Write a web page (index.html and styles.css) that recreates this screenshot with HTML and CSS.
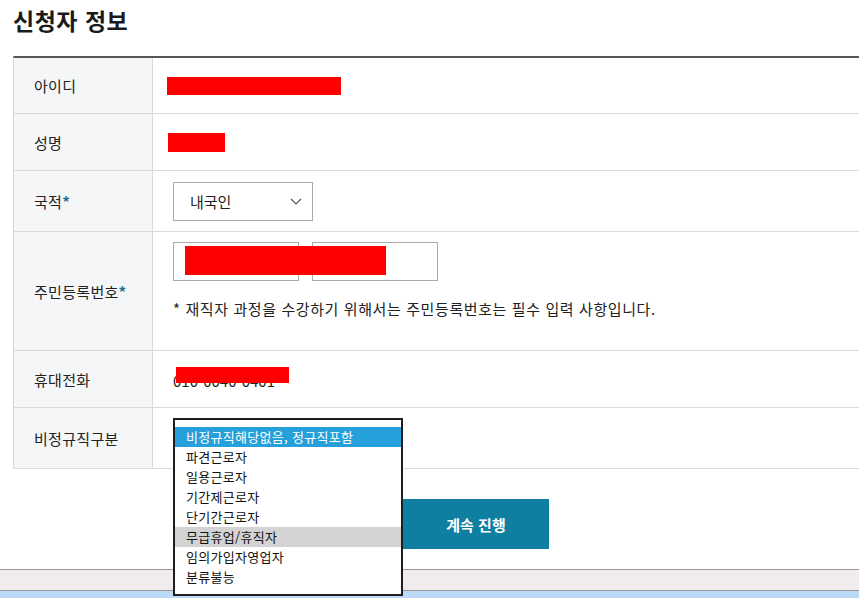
FILE: index.html
```html
<!DOCTYPE html>
<html lang="ko">
<head>
  <meta charset="UTF-8" />
  <title>신청자 정보</title>
  <link rel="stylesheet" href="styles.css">
</head>
<body>
  <div class="page">
    <h1>신청자 정보</h1>
    <div class="form-table">
      <div class="row row-first">
        <div class="label">아이디</div>
        <div class="value"><span class="mask mask-id"></span></div>
      </div>
      <div class="row">
        <div class="label">성명</div>
        <div class="value"><span class="mask mask-name"></span></div>
      </div>
      <div class="row row-mid">
        <div class="label">국적<span class="req">*</span></div>
        <div class="value">
          <div class="select">
            <span>내국인</span>
            <svg width="12" height="7" viewBox="0 0 12 7"><polyline points="1,1 6,6 11,1" fill="none" stroke="#555" stroke-width="1.1"/></svg>
          </div>
        </div>
      </div>
      <div class="row row-tall">
        <div class="label">주민등록번호<span class="req">*</span></div>
        <div class="value value-stack">
          <div class="ssn">
            <div class="input"></div>
            <div class="input"></div>
            <span class="mask mask-ssn"></span>
          </div>
          <p class="note">* 재직자 과정을 수강하기 위해서는 주민등록번호는 필수 입력 사항입니다.</p>
        </div>
      </div>
      <div class="row">
        <div class="label">휴대전화</div>
        <div class="value">
          <div class="phone">010-0040-0401<span class="mask mask-phone"></span></div>
        </div>
      </div>
      <div class="row row-mid">
        <div class="label">비정규직구분</div>
        <div class="value value-top">
          <div class="combo">
            <ul class="options">
              <li class="selected">비정규직해당없음, 정규직포함</li>
              <li>파견근로자</li>
              <li>일용근로자</li>
              <li>기간제근로자</li>
              <li>단기간근로자</li>
              <li class="hover">무급휴업/휴직자</li>
              <li>임의가입자영업자</li>
              <li>분류불능</li>
            </ul>
          </div>
        </div>
      </div>
    </div>
    <div class="actions">
      <button class="btn-next">계속 진행</button>
    </div>
  </div>
  <div class="statusbar"></div>
  <div class="taskbar"></div>
</body>
</html>
```

FILE: styles.css
```css
html, body {
  margin: 0;
  padding: 0;
  overflow: hidden;
}
body {
  width: 859px;
  height: 598px;
  font-family: "Noto Sans CJK KR", "Noto Sans", sans-serif;
  color: #222;
  background: #fff;
}
.page {
  padding-left: 13px;
  width: 1000px;
}
h1 {
  margin: 0 0 20px;
  padding-top: 4px;
  font-size: 23px;
  line-height: 32px;
  font-weight: 700;
  color: #1a1a1a;
  letter-spacing: 0.5px;
}
.form-table {
  border-top: 2px solid #555;
  border-left: 1px solid #dadada;
}
.row {
  display: grid;
  grid-template-columns: 139px 1fr;
  height: 57px;
  box-sizing: border-box;
  border-bottom: 1px solid #dadada;
}
.row-first {
  height: 56px;
}
.row-mid {
  height: 61px;
}
.row-tall {
  height: 119px;
}
.label {
  display: flex;
  align-items: center;
  padding-left: 20px;
  background: #f5f6f8;
  border-right: 1px solid #dadada;
  font-size: 15px;
  letter-spacing: 0.3px;
}
.req {
  color: #1a6f9a;
  font-weight: 700;
}
.value {
  display: flex;
  align-items: center;
  padding-left: 15px;
  position: relative;
}
.mask {
  display: block;
  background: #ff0000;
}
.mask-id {
  width: 174px;
  height: 18px;
  margin-left: -1px;
}
.mask-name {
  width: 57px;
  height: 19px;
}
.select {
  margin-left: 5px;
  width: 140px;
  height: 39px;
  box-sizing: border-box;
  border: 1px solid #aaa;
  display: flex;
  align-items: center;
  justify-content: space-between;
  padding: 0 10px 0 16px;
  font-size: 15px;
}
.value-stack {
  flex-direction: column;
  align-items: flex-start;
  justify-content: flex-start;
  padding-top: 10px;
}
.ssn {
  position: relative;
  display: flex;
  gap: 13px;
  margin-left: 5px;
}
.input {
  width: 126px;
  height: 39px;
  box-sizing: border-box;
  border: 1px solid #aaa;
}
.mask-ssn {
  position: absolute;
  left: 12px;
  top: 4px;
  width: 201px;
  height: 29px;
}
.note {
  margin: 18px 0 0 5px;
  font-size: 15px;
  line-height: 20px;
  letter-spacing: 0.6px;
}
.phone {
  position: relative;
  margin-left: 5px;
  font-size: 15px;
  line-height: 20px;
  padding-top: 4px;
}
.mask-phone {
  position: absolute;
  left: 3px;
  top: 0;
  width: 113px;
  height: 16px;
}
.value-top {
  align-items: flex-start;
}
.combo {
  position: relative;
  margin-left: 5px;
}
.options {
  position: absolute;
  left: 0;
  top: 10px;
  z-index: 5;
  width: 230px;
  height: 178px;
  box-sizing: border-box;
  margin: 0;
  padding: 7px 0 0;
  list-style: none;
  border: 2px solid #1e1e1e;
  background: #fff;
}
.options li {
  height: 20px;
  line-height: 20px;
  padding-left: 11px;
  font-size: 13px;
  letter-spacing: 0.3px;
  color: #111;
}
.options .selected {
  background: #26a0da;
  color: #fff;
}
.options .hover {
  background: #d3d3d3;
}
.actions {
  padding: 30px 0 0 390px;
}
.btn-next {
  width: 146px;
  height: 50px;
  border: none;
  background: #0e7fa0;
  color: #fff;
  font-family: inherit;
  font-size: 15px;
  font-weight: 700;
}
.statusbar {
  margin-top: 20px;
  height: 20px;
  background: #f0eceb;
  border-top: 1px solid #999;
  border-bottom: 1px solid #999;
}
.taskbar {
  height: 8px;
  background: #bbdaf8;
}
```
